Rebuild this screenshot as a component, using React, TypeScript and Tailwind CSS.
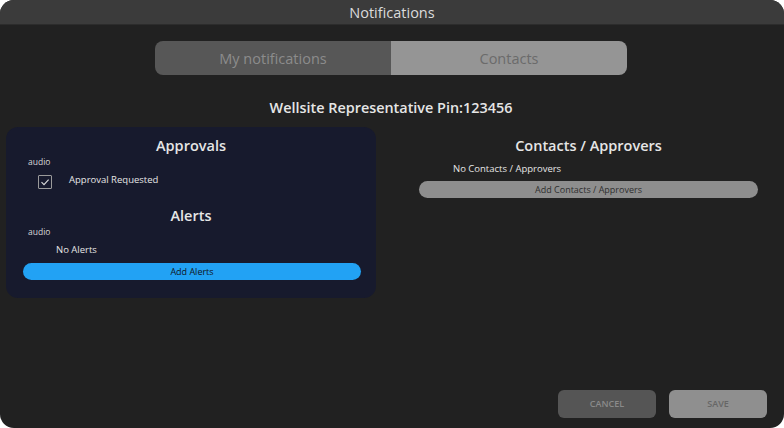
import React from "react";

export default function App() {
  const font = { fontFamily: '"Open Sans", "Noto Sans", sans-serif' };
  return (
    <div className="w-[784px] h-[428px] bg-white" style={font}>
      <div className="w-full h-full rounded-[14px] bg-[#212121] overflow-hidden flex flex-col">
        <div className="h-[25px] bg-[#3b3b3b] border-b border-[#2c2c2c] flex items-center justify-center pt-[3px]">
          <span className="text-[14.5px] text-[#dcdcdc] leading-none">Notifications</span>
        </div>
        <div className="flex-1 flex flex-col">
          <div className="mt-[16px] ml-[155px] w-[472px] h-[34px] flex rounded-[8px] overflow-hidden">
            <div className="w-[236px] bg-[#575757] flex items-center justify-center pt-[2px] text-[14.5px] text-[#8c8c8c]">
              My notifications
            </div>
            <div className="flex-1 bg-[#959595] flex items-center justify-center pt-[2px] text-[14.5px] text-[#6b6b6b]">
              Contacts
            </div>
          </div>
          <div className="mt-[23px] ml-[6px] w-[770px] text-center text-[14.4px] font-semibold leading-[20px] text-[#e6e6e6]">
            Wellsite Representative Pin:123456
          </div>
          <div className="mt-[9px] flex">
            <div className="ml-[6px] w-[370px] rounded-[12px] bg-[#171a2d] pt-[9px] pb-[18px] flex flex-col">
              <div className="text-center text-[14.5px] font-semibold leading-[20px] text-[#e6e6e6]">Approvals</div>
              <div className="pl-[22px] text-[8.5px] leading-[12px] text-[#d8d8d8]">audio</div>
              <div className="mt-[6px] h-[16px] flex items-center">
                <div className="ml-[32px] w-[14px] h-[14px] border border-[#9a9a9a] rounded-[1px] flex items-center justify-center">
                  <svg width="10" height="10" viewBox="0 0 10 10" fill="none">
                    <path d="M1.5 5.2 L4 7.6 L8.6 2.6" stroke="#dcdcdc" strokeWidth="1.1" />
                  </svg>
                </div>
                <span className="ml-[17px] mb-[3px] text-[9.5px] text-[#e6e6e6]">Approval Requested</span>
              </div>
              <div className="mt-[16px] text-center text-[14.5px] font-semibold leading-[20px] text-[#e6e6e6]">Alerts</div>
              <div className="pl-[22px] text-[8.5px] leading-[12px] text-[#d8d8d8]">audio</div>
              <div className="mt-[5px] pl-[50px] text-[9.5px] leading-[14px] text-[#e6e6e6]">No Alerts</div>
              <div className="mt-[6px] ml-[17px] w-[338px] h-[17px] rounded-full bg-[#22a2f4] flex items-center justify-center text-[9px] font-medium text-[#111522]">
                Add Alerts
              </div>
            </div>
            <div className="ml-[43px] w-[339px] pt-[9px] flex flex-col">
              <div className="text-center text-[14.5px] font-semibold leading-[20px] text-[#e6e6e6]">Contacts / Approvers</div>
              <div className="mt-[6px] pl-[34px] text-[9.5px] leading-[14px] text-[#e6e6e6]">No Contacts / Approvers</div>
              <div className="mt-[5px] h-[17px] rounded-full bg-[#8e8e8e] flex items-center justify-center text-[9px] font-medium text-[#2e2e2e]">
                Add Contacts / Approvers
              </div>
            </div>
          </div>
          <div className="flex-1" />
          <div className="flex justify-end gap-[13px] pr-[17px] pb-[10px]">
            <div className="w-[98px] h-[28px] rounded-[6px] bg-[#555555] flex items-center justify-center text-[9px] font-semibold text-[#8a8a8a]">
              CANCEL
            </div>
            <div className="w-[98px] h-[28px] rounded-[6px] bg-[#8f8f8f] flex items-center justify-center text-[9px] font-semibold text-[#666666]">
              SAVE
            </div>
          </div>
        </div>
      </div>
    </div>
  );
}
